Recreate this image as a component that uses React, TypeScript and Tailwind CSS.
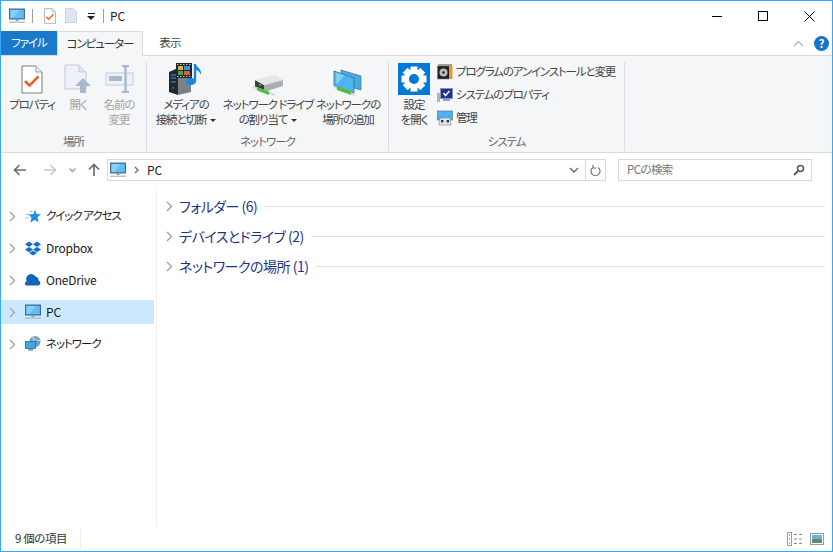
const font = { fontFamily: '"Noto Sans CJK JP", "Noto Sans", sans-serif' };

// icons
function PcIcon({ size = 16 }: { size?: number }) {
  return (
    <svg width={size} height={size} viewBox="0 0 16 16" className="shrink-0">
      <rect x="0.500" y="1" width="15" height="10" fill="#3f9fe0" stroke="#3b5f7c" strokeWidth="0.900" />
      <rect x="1.500" y="2" width="13" height="8" fill="#63bdf2" />
      <path d="M1.500 2h9l-6 8h-3z" fill="#86d0f8" />
      <rect x="6.500" y="11" width="3" height="2" fill="#8aa0b0" />
      <rect x="0" y="13.600" width="16" height="1.200" fill="#a9b4bc" />
    </svg>
  );
}

function Chevron({ color = "#a6a6a6" }: { color?: string }) {
  return (
    <svg width="7" height="11" viewBox="0 0 7 11" className="shrink-0">
      <path d="M1 1l4.500 4.500L1 10" fill="none" stroke={color} strokeWidth="1.400" />
    </svg>
  );
}

function DocCheck({ w = 22, h = 29 }: { w?: number; h?: number }) {
  return (
    <svg width={w} height={h} viewBox="0 0 22 29">
      <path d="M1 1h14l6 6v21H1z" fill="#fff" stroke="#7a7a7a" />
      <path d="M15 1v6h6" fill="#eee" stroke="#9a9a9a" />
      <path d="M4 16l4.500 4.500 9-9" fill="none" stroke="#e8622a" strokeWidth="2.600" />
    </svg>
  );
}

function OpenIcon() {
  return (
    <svg width="28" height="30" viewBox="0 0 28 30">
      <path d="M1 1h14l7 7v17H1z" fill="#eef2f8" stroke="#bccbdf" />
      <path d="M15 1v7h7" fill="#dfe6f0" stroke="#bccbdf" />
      <path d="M19 14l-8 8h5v7h6v-7h5z" fill="#a9b9cb" />
    </svg>
  );
}

function RenameIcon() {
  return (
    <svg width="29" height="28" viewBox="0 0 29 28">
      <rect x="1" y="8" width="27" height="12" fill="#eef2f8" stroke="#bccbdf" />
      <rect x="4" y="11" width="13" height="5" fill="#a9b9cb" />
      <path d="M17 1h7M17 27h7M20.500 1v26" fill="none" stroke="#a9b9cb" strokeWidth="2.400" />
    </svg>
  );
}

function MediaIcon() {
  return (
    <svg width="34" height="32" viewBox="0 0 34 32">
      <path d="M0 9l9-4v27l-9-3z" fill="#23282d" />
      <path d="M9 5l13 4v20l-13 3z" fill="#7b8186" />
      <path d="M2 12h5M2 15h5M2 19h5M3 25h2" stroke="#2f9be8" strokeWidth="1.200" />
      <rect x="7" y="0" width="16" height="15" fill="#1c2530" />
      <path d="M8 1.500h14M8 13.500h14" stroke="#b9c4cc" strokeWidth="1" strokeDasharray="1.500 1.500" />
      <rect x="9" y="3" width="5" height="4" fill="#e2b33b" />
      <rect x="15" y="3" width="6" height="4" fill="#3f8fd2" />
      <rect x="9" y="8" width="5" height="4" fill="#4fa04a" />
      <rect x="15" y="8" width="6" height="4" fill="#d8662f" />
      <path d="M26 1v17" stroke="#1a88e0" strokeWidth="2.400" />
      <path d="M26 0c1 4 7 5 6 12-1-3-3-5-6-5z" fill="#1a88e0" />
      <ellipse cx="22" cy="18.500" rx="5" ry="3.500" fill="#1a88e0" />
    </svg>
  );
}

function DriveIcon() {
  return (
    <svg width="32" height="34" viewBox="0 0 32 34">
      <path d="M3 18l9 5v7l-9-5z" fill="#3a3f42" />
      <path d="M12 23l19-5v6l-19 6z" fill="#a9aeb1" />
      <path d="M3 18l20-5 8 5-19 5z" fill="#e3e5e6" />
      <circle cx="8" cy="23" r="0.900" fill="#5fd44a" />
      <path d="M0.500 24.500L23 33" stroke="#d7dadb" strokeWidth="2" />
      <path d="M5 25l12 4.500v3.500L5 28.500z" fill="#58b947" />
    </svg>
  );
}

function NetLocIcon() {
  return (
    <svg width="30" height="34" viewBox="0 0 30 34">
      <path d="M8 8l20 6v14l-20-6z" fill="#4ba8e4" stroke="#40708f" strokeWidth="0.700" />
      <path d="M1 9l20 7v15L1 24z" fill="#4fb4f2" stroke="#37708f" strokeWidth="0.800" />
      <path d="M2.500 10.500l9 3-8 9z" fill="#7fd0f8" />
      <path d="M1 25l21 8" stroke="#d7dadb" strokeWidth="2" />
      <path d="M4 24l14 5v4L4 28z" fill="#58b947" />
    </svg>
  );
}

function GearIcon() {
  return (
    <svg width="32" height="32" viewBox="0 0 32 32" className="shrink-0">
      <rect width="32" height="32" fill="#0078d7" />
      <g fill="#fff">
        {[0, 45, 90, 135, 180, 225, 270, 315].map((a) => (
          <rect key={a} x="12.500" y="3.500" width="7" height="6" transform={`rotate(${a} 16 16)`} />
        ))}
      </g>
      <circle cx="16" cy="16" r="7.500" fill="none" stroke="#fff" strokeWidth="5" />
    </svg>
  );
}

function UninstallIcon() {
  return (
    <svg width="16" height="17" viewBox="0 0 16 17" className="shrink-0">
      <rect x="1" y="1" width="14" height="3" fill="#9aa88a" />
      <rect x="0.500" y="3" width="12" height="13" fill="#222" stroke="#777" strokeWidth="0.600" />
      <rect x="12" y="3" width="3.500" height="13" fill="#e29a3c" />
      <circle cx="6.500" cy="9.500" r="4" fill="#bbb" />
      <circle cx="6.500" cy="9.500" r="1.300" fill="#222" />
    </svg>
  );
}

function SysPropIcon() {
  return (
    <svg width="16" height="16" viewBox="0 0 16 16" className="shrink-0">
      <rect x="0" y="6" width="3" height="9" fill="#aeb4b8" />
      <rect x="3.500" y="1.500" width="12" height="10" fill="#1f2f9c" stroke="#8a98a6" />
      <path d="M6.500 6l2 2.500 4-4.500" fill="none" stroke="#fff" strokeWidth="1.500" />
      <rect x="6" y="12" width="7" height="2" fill="#9aa4ad" />
    </svg>
  );
}

function ManageIcon() {
  return (
    <svg width="16" height="16" viewBox="0 0 16 16" className="shrink-0">
      <rect x="0.500" y="1" width="15" height="9" fill="#4fb0ee" stroke="#56798f" strokeWidth="0.700" />
      <path d="M3 8h10l1 7H2z" fill="#e4e6e7" stroke="#7c8287" strokeWidth="0.600" />
      <rect x="4" y="10" width="2.400" height="2.400" fill="#333" />
      <rect x="9.600" y="10" width="2.400" height="2.400" fill="#333" />
    </svg>
  );
}

function Caret() {
  return <span className="ml-[4px] inline-block h-0 w-0 border-x-[3px] border-t-[3px] border-x-transparent border-t-[#333] align-middle" />;
}

function RibbonButton({ icon, lines, width, muted, caret }: { icon: React.ReactNode; lines: string[]; width: number; muted?: boolean; caret?: boolean }) {
  return (
    <div className="flex shrink-0 flex-col items-center" style={{ width }}>
      <div className="flex h-[34px] items-center justify-center">{icon}</div>
      <div className={`mt-[1px] text-center text-[11.500px] leading-[15px] tracking-[-1.100px] whitespace-nowrap [font-feature-settings:'palt'] ${muted ? "text-[#a3a3a3]" : "text-[#444]"}`}>
        {lines.map((l, i) => (
          <div key={l}>
            {l}
            {caret && i === lines.length - 1 && <Caret />}
          </div>
        ))}
      </div>
    </div>
  );
}

function RibbonGroup({ label, width, children, className = "" }: { label: string; width: number; children: React.ReactNode; className?: string }) {
  return (
    <div className="flex h-[89px] shrink-0 flex-col border-r border-[#dcdfe2]" style={{ width }}>
      <div className={`flex h-[72px] items-start ${className}`}>{children}</div>
      <div className="text-center text-[11.500px] leading-[15px] tracking-[-1px] text-[#666] [font-feature-settings:'palt']">{label}</div>
    </div>
  );
}

function SmallAction({ icon, label }: { icon: React.ReactNode; label: string }) {
  return (
    <div className="flex h-[23px] items-center gap-[3px]">
      {icon}
      <span className="text-[11.500px] tracking-[-1.150px] whitespace-nowrap text-[#444] [font-feature-settings:'palt']">{label}</span>
    </div>
  );
}

function NavRow({ icon, label, active, jp }: { icon: React.ReactNode; label: string; active?: boolean; jp?: boolean }) {
  return (
    <div className={`flex h-[24px] w-[153px] items-center ${active ? "bg-[#cce8ff]" : ""}`}>
      <div className="ml-[8px] w-[16px]">
        <Chevron />
      </div>
      <div className="flex w-[21px] justify-start">{icon}</div>
      <span className={`whitespace-nowrap text-[#1a1a1a] [font-feature-settings:'palt'] ${jp ? "text-[11.500px] tracking-[-1.050px]" : "text-[12px] tracking-[-0.200px]"}`}>{label}</span>
    </div>
  );
}

function SectionRow({ label }: { label: string }) {
  return (
    <div className="flex h-[30px] items-center">
      <Chevron color="#a0a0a0" />
      <span className="ml-[6px] text-[14px] tracking-[-0.500px] whitespace-nowrap text-[#1e3287] [font-feature-settings:'palt']">{label}</span>
      <div className="mr-[7px] ml-[7px] h-px flex-1 bg-[#e2e2e2]" />
    </div>
  );
}

export default function App() {
  return (
    <div className="flex h-[552px] w-[833px] flex-col overflow-hidden border border-[#38a8f5] bg-white" style={font}>
      {/* title bar */}
      <div className="flex h-[30px] shrink-0 items-center">
        <div className="ml-[8px]">
          <PcIcon />
        </div>
        <div className="ml-[7px] h-[14px] w-px bg-[#a0a0a0]" />
        <div className="ml-[11px]">
          <DocCheck w={12} h={16} />
        </div>
        <svg width="13" height="16" viewBox="0 0 13 16" className="ml-[9px]">
          <path d="M0.500 0.500h8l3 3v11h-11z" fill="#dfe6f2" stroke="#c9d4e4" />
        </svg>
        <div className="ml-[9px] flex flex-col items-center gap-[2px]">
          <div className="h-px w-[7px] bg-[#222]" />
          <div className="h-0 w-0 border-x-[4px] border-t-[4px] border-x-transparent border-t-[#222]" />
        </div>
        <div className="ml-[8px] h-[14px] w-px bg-[#a0a0a0]" />
        <span className="ml-[6px] text-[12px] text-[#222]">PC</span>
        <div className="ml-auto flex">
          <div className="flex h-[30px] w-[46px] items-center justify-center">
            <div className="h-px w-[10px] bg-black" />
          </div>
          <div className="flex h-[30px] w-[46px] items-center justify-center">
            <div className="h-[10px] w-[10px] border border-black" />
          </div>
          <div className="flex h-[30px] w-[46px] items-center justify-center">
            <svg width="11" height="11" viewBox="0 0 11 11">
              <path d="M0.500 0.500l10 10M10.500 0.500l-10 10" stroke="#000" strokeWidth="1" />
            </svg>
          </div>
        </div>
      </div>

      {/* tabs */}
      <div className="flex h-[25px] shrink-0 items-stretch border-b border-[#dadbdc]">
        <div className="flex w-[56px] items-center justify-center bg-[#1979ca] text-[11.500px] tracking-[-1px] text-white [font-feature-settings:'palt']">ファイル</div>
        <div className="-mb-px flex w-[86px] items-center justify-center border-x border-t border-[#dadbdc] bg-[#f5f6f7] text-[11.500px] tracking-[-1.100px] text-[#333] [font-feature-settings:'palt']">コンピューター</div>
        <div className="flex w-[54px] items-center justify-center text-[11.500px] tracking-[-0.800px] text-[#444]">表示</div>
        <div className="ml-auto flex items-center gap-[10px] pr-[3px]">
          <svg width="11" height="7" viewBox="0 0 11 7">
            <path d="M1 6l4.500-4.500L10 6" fill="none" stroke="#b5b5b5" strokeWidth="1.300" />
          </svg>
          <div className="flex h-[15px] w-[15px] items-center justify-center rounded-full bg-[#1773c7] text-[11px] leading-none font-bold text-white">?</div>
        </div>
      </div>

      {/* ribbon */}
      <div className="flex h-[97px] shrink-0 border-b border-[#dadbdc] bg-[#f5f6f7] pt-[6px]">
        <RibbonGroup label="場所" width={146} className="pl-[5px]">
          <RibbonButton width={52} icon={<DocCheck />} lines={["プロパティ"]} />
          <RibbonButton width={40} icon={<OpenIcon />} lines={["開く"]} muted />
          <RibbonButton width={42} icon={<RenameIcon />} lines={["名前の", "変更"]} muted />
        </RibbonGroup>
        <RibbonGroup label="ネットワーク" width={242} className="pl-[2px]">
          <RibbonButton width={74} icon={<MediaIcon />} lines={["メディアの", "接続と切断"]} caret />
          <RibbonButton width={90} icon={<DriveIcon />} lines={["ネットワーク ドライブ", "の割り当て"]} caret />
          <RibbonButton width={70} icon={<NetLocIcon />} lines={["ネットワークの", "場所の追加"]} />
        </RibbonGroup>
        <RibbonGroup label="システム" width={236} className="pl-[9px]">
          <RibbonButton width={32} icon={<GearIcon />} lines={["設定", "を開く"]} />
          <div className="-mt-[2px] ml-[7px] flex flex-col">
            <SmallAction icon={<UninstallIcon />} label="プログラムのアンインストールと変更" />
            <SmallAction icon={<SysPropIcon />} label="システムのプロパティ" />
            <SmallAction icon={<ManageIcon />} label="管理" />
          </div>
        </RibbonGroup>
      </div>

      {/* address bar */}
      <div className="flex h-[34px] shrink-0 items-center">
        <svg width="14" height="12" viewBox="0 0 14 12" className="ml-[12px]">
          <path d="M13 6H2M6.500 1L1.500 6l5 5" fill="none" stroke="#6b6b6b" strokeWidth="1.600" />
        </svg>
        <svg width="14" height="12" viewBox="0 0 14 12" className="ml-[16px]">
          <path d="M1 6h11M7.500 1l5 5-5 5" fill="none" stroke="#c9c9c9" strokeWidth="1.600" />
        </svg>
        <svg width="7" height="5" viewBox="0 0 7 5" className="ml-[12px]">
          <path d="M0.500 0.500L3.500 3.500l3-3" fill="none" stroke="#9a9a9a" strokeWidth="1.300" />
        </svg>
        <svg width="12" height="14" viewBox="0 0 12 14" className="ml-[12px]">
          <path d="M6 13V2M1 6.500l5-5 5 5" fill="none" stroke="#6b6b6b" strokeWidth="1.700" />
        </svg>
        <div className="ml-[7px] flex h-[22px] w-[499px] items-center border border-[#d9d9d9]">
          <div className="ml-[2px]">
            <PcIcon />
          </div>
          <svg width="5" height="8" viewBox="0 0 5 8" className="ml-[8px]">
            <path d="M1 1l3 3-3 3" fill="none" stroke="#6b6b6b" strokeWidth="1.300" />
          </svg>
          <span className="ml-[8px] text-[12px] text-[#222]">PC</span>
          <svg width="10" height="6" viewBox="0 0 10 6" className="mr-[6px] ml-auto">
            <path d="M1 1l4 4 4-4" fill="none" stroke="#666" strokeWidth="1.400" />
          </svg>
          <div className="flex h-full w-[20px] items-center justify-center border-l border-[#d9d9d9]">
            <svg width="11" height="13" viewBox="0 0 11 13">
              <path d="M3 3.500a4.500 4.500 0 1 0 5 0M3 1v3h3" fill="none" stroke="#777" strokeWidth="1.200" />
            </svg>
          </div>
        </div>
        <div className="ml-[12px] flex h-[22px] w-[194px] items-center border border-[#d9d9d9] pr-[6px] pl-[8px]">
          <span className="text-[11.500px] tracking-[-0.600px] text-[#777] [font-feature-settings:'palt']">PCの検索</span>
          <svg width="12" height="12" viewBox="0 0 12 12" className="ml-auto">
            <circle cx="7.500" cy="4.500" r="3" fill="none" stroke="#555" strokeWidth="1.500" />
            <path d="M5.500 6.500L1 11" stroke="#555" strokeWidth="1.800" />
          </svg>
        </div>
      </div>

      {/* main */}
      <div className="flex min-h-0 flex-1">
        <div className="flex w-[156px] shrink-0 flex-col gap-[8px] border-r border-[#f0f0f0] pt-[17px]">
          <NavRow
            jp
            label="クイック アクセス"
            icon={
              <svg width="16" height="15" viewBox="0 0 16 15">
                <path d="M10 0.500l1.500 4.500 4.500.3-3.500 3 1.200 5L9.500 11l-4.200 2.800 1.200-5L3.500 5.500l5-.5z" fill="#1e90e6" />
                <path d="M4.500 2.500h3M1 5.500h3M0 9h3.500" stroke="#8cc7ef" strokeWidth="1" />
              </svg>
            }
          />
          <NavRow
            label="Dropbox"
            icon={
              <svg width="16" height="15" viewBox="0 0 16 15">
                <path d="M4 0.500L0 3.200l4 2.700 4-2.700zM12 0.500L8 3.200l4 2.700 4-2.700zM4 5.900L0 8.600l4 2.700 4-2.700zM12 5.900L8 8.600l4 2.700 4-2.700zM8 9.500l-4 2.500 4 2.500 4-2.500z" fill="#0f6fd0" />
              </svg>
            }
          />
          <NavRow
            label="OneDrive"
            icon={
              <svg width="16" height="12" viewBox="0 0 16 12">
                <path d="M3 11.500H2a2 2 0 0 1-.2-4A4.500 4.500 0 0 1 10.400 2.500 3.800 3.800 0 0 1 13.500 6.500a2.600 2.600 0 0 1 0 5z" fill="#0d66bd" />
              </svg>
            }
          />
          <NavRow label="PC" icon={<PcIcon />} active />
          <NavRow
            jp
            label="ネットワーク"
            icon={
              <svg width="16" height="16" viewBox="0 0 16 16">
                <circle cx="10" cy="5.500" r="5.500" fill="#6f9fc0" />
                <path d="M7 1.500c2 2 5 3 8 3M9 0.500c-1 3-1 6 0 10" fill="none" stroke="#d8e6ef" strokeWidth="0.800" />
                <rect x="0.500" y="5.500" width="10" height="7" fill="#3fa6ea" stroke="#3c6a88" strokeWidth="0.800" />
                <rect x="3" y="13" width="5" height="1.500" fill="#7d95a6" />
              </svg>
            }
          />
        </div>
        <div className="flex-1 pt-[4px] pl-[9px]">
          <SectionRow label="フォルダー (6)" />
          <SectionRow label="デバイスとドライブ (2)" />
          <SectionRow label="ネットワークの場所 (1)" />
        </div>
      </div>

      {/* status bar */}
      <div className="flex h-[24px] shrink-0 items-center">
        <span className="ml-[14px] w-[65px] text-[11.500px] tracking-[-0.400px] text-[#333] [font-feature-settings:'palt']">9 個の項目</span>
        <div className="h-[20px] w-px bg-[#f0f0f0]" />
        <div className="ml-auto flex items-center gap-[7px] pr-[8px]">
          <svg width="16" height="14" viewBox="0 0 16 14">
            <rect x="0.500" y="0.500" width="4" height="13" fill="#fff" stroke="#9a9a9a" />
            <path d="M2.500 2.500v1M2.500 6.500v1M2.500 10.500v1" stroke="#555" />
            <path d="M7 2.500h3M12 2.500h3M7 7h3M12 7h3M7 11.500h3M12 11.500h3" stroke="#8a8a8a" />
          </svg>
          <svg width="14" height="12" viewBox="0 0 14 12">
            <rect x="0.500" y="0.500" width="13" height="11" fill="#fff" stroke="#9a9a9a" />
            <rect x="2" y="2" width="10" height="4" fill="#6fb0dc" />
            <rect x="2" y="6" width="10" height="4" fill="#5d8c6a" />
          </svg>
        </div>
      </div>
    </div>
  );
}
